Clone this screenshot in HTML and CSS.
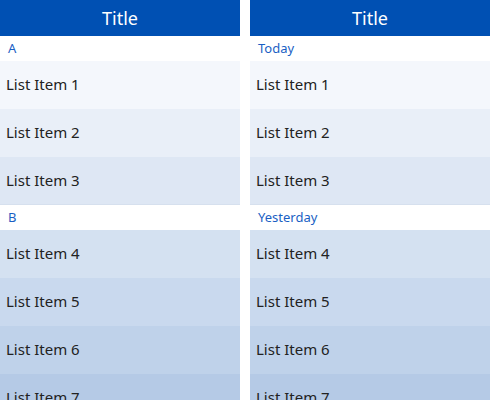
FILE: index.html
```html
<!DOCTYPE html>
<html>
<head>
<meta charset="utf-8">
<link rel="stylesheet" href="styles.css">
</head>
<body>
<div class="page">
  <div class="panel">
    <div class="title">Title</div>
    <div class="header">A</div>
    <div class="item c1">List Item 1</div>
    <div class="item c2">List Item 2</div>
    <div class="item c3">List Item 3</div>
    <div class="header">B</div>
    <div class="item c4">List Item 4</div>
    <div class="item c5">List Item 5</div>
    <div class="item c6">List Item 6</div>
    <div class="item c7">List Item 7</div>
  </div>
  <div class="panel">
    <div class="title">Title</div>
    <div class="header">Today</div>
    <div class="item c1">List Item 1</div>
    <div class="item c2">List Item 2</div>
    <div class="item c3">List Item 3</div>
    <div class="header">Yesterday</div>
    <div class="item c4">List Item 4</div>
    <div class="item c5">List Item 5</div>
    <div class="item c6">List Item 6</div>
    <div class="item c7">List Item 7</div>
  </div>
</div>
</body>
</html>
```

FILE: styles.css
```css
html, body {
  margin: 0;
  padding: 0;
  background: #ffffff;
  overflow: hidden;
}
body {
  font-family: "Noto Sans", "Open Sans", sans-serif;
}
.page {
  display: flex;
  gap: 10px;
  width: 490px;
  height: 400px;
  overflow: hidden;
}
.panel {
  width: 240px;
  display: flex;
  flex-direction: column;
  flex-shrink: 0;
}
.title {
  height: 36px;
  background: #0050b3;
  color: #ffffff;
  font-size: 18px;
  line-height: 36px;
  text-align: center;
}
.header {
  height: 26px;
  line-height: 25px;
  padding-left: 8px;
  font-size: 13px;
  color: #1a5fc4;
  background: #ffffff;
}
.item {
  height: 48px;
  line-height: 46px;
  padding-left: 6px;
  font-size: 15px;
  color: #222222;
  flex-shrink: 0;
}
.c1 { background: #f4f7fc; }
.c2 { background: #e9eff8; }
.c3 { background: #dee7f4; border-bottom: 1px solid #d6e0ee; height: 47px; }
.c4 { background: #d4e1f1; }
.c5 { background: #c9d9ee; }
.c6 { background: #bfd2ea; }
.c7 { background: #b5cae6; }
```
